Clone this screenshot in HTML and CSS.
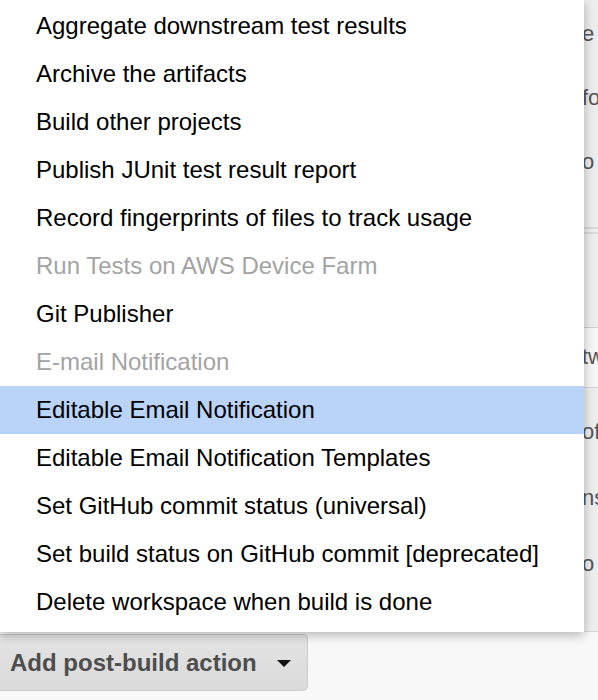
FILE: index.html
```html
<!DOCTYPE html>
<html>
<head>
<meta charset="utf-8">
<link rel="stylesheet" href="styles.css">
</head>
<body>
<div class="page">
  <div class="panel">
    <div class="section top">
      <div class="bgline">e</div>
      <div class="bgline">fo</div>
      <div class="bgline">o</div>
    </div>
    <div class="section gap"></div>
    <div class="section light">
      <div class="bgline">tw</div>
    </div>
    <div class="section bottom">
      <div class="bgline">of</div>
      <div class="bgline">ns</div>
      <div class="bgline">o</div>
    </div>
  </div>
  <div class="actions">
    <button class="add-btn">Add post-build action <span class="caret"></span></button>
  </div>

  <ul class="menu">
    <li class="item">Aggregate downstream test results</li>
    <li class="item">Archive the artifacts</li>
    <li class="item">Build other projects</li>
    <li class="item">Publish JUnit test result report</li>
    <li class="item">Record fingerprints of files to track usage</li>
    <li class="item disabled">Run Tests on AWS Device Farm</li>
    <li class="item">Git Publisher</li>
    <li class="item disabled">E-mail Notification</li>
    <li class="item active">Editable Email Notification</li>
    <li class="item">Editable Email Notification Templates</li>
    <li class="item">Set GitHub commit status (universal)</li>
    <li class="item">Set build status on GitHub commit [deprecated]</li>
    <li class="item">Delete workspace when build is done</li>
  </ul>
</div>
</body>
</html>
```

FILE: styles.css
```css
html, body {
  margin: 0;
  padding: 0;
}
body {
  width: 598px;
  height: 700px;
  overflow: hidden;
  background: #f8f8f8;
  font-family: "Liberation Sans", Arial, sans-serif;
}
.page {
  position: relative;
  height: 700px;
  overflow: hidden;
}
.panel {
  height: 632px;
  display: flex;
  flex-direction: column;
  background: #ededed;
  border-bottom: 1px solid #d6d6d6;
  box-sizing: border-box;
  overflow: hidden;
}
.section {
  box-sizing: border-box;
}
.section.top {
  height: 229px;
  padding-top: 22px;
  border-bottom: 2px solid #d8d8d8;
}
.section.gap {
  height: 96px;
  border-top: 2px solid #d8d8d8;
  margin-top: 3px;
  border-bottom: 1px solid #cfcfcf;
}
.section.light {
  height: 60px;
  background: #f6f6f6;
  border-bottom: 1px solid #d4d4d4;
  padding-top: 17px;
}
.section.bottom {
  flex: 1;
  padding-top: 32px;
}
.bgline {
  padding-left: 582px;
  font-size: 22px;
  line-height: 24px;
  height: 24px;
  margin-bottom: 42px;
  color: #555555;
  white-space: nowrap;
}
.section.top .bgline { margin-bottom: 40px; }
.section.light .bgline { margin-bottom: 0; }

.actions {
  padding-top: 2px;
}
.add-btn {
  display: flex;
  align-items: center;
  gap: 20px;
  width: 308px;
  height: 57px;
  margin: 0;
  padding: 0 0 0 10px;
  box-sizing: border-box;
  border: 1px solid #cccccc;
  border-left: none;
  border-radius: 0 5px 5px 0;
  background: linear-gradient(#e3e3e3, #dadada);
  font-family: "Liberation Sans", Arial, sans-serif;
  font-weight: bold;
  font-size: 24px;
  color: #4d4d4d;
  white-space: nowrap;
}
.caret {
  width: 0;
  height: 0;
  border-left: 7px solid transparent;
  border-right: 7px solid transparent;
  border-top: 7px solid #111;
  margin-top: 2px;
}

.menu {
  position: absolute;
  top: 0;
  left: 0;
  width: 584px;
  margin: 0;
  padding: 2px 0 6px 0;
  list-style: none;
  background: #ffffff;
  box-shadow: 0 3px 10px rgba(0, 0, 0, 0.28);
  box-sizing: border-box;
}
.item {
  height: 48px;
  line-height: 48px;
  padding-left: 36px;
  font-size: 24px;
  color: #000;
  white-space: nowrap;
}
.item.disabled {
  color: #a3a3a3;
}
.item.active {
  background: #b9d3f9;
}
```
